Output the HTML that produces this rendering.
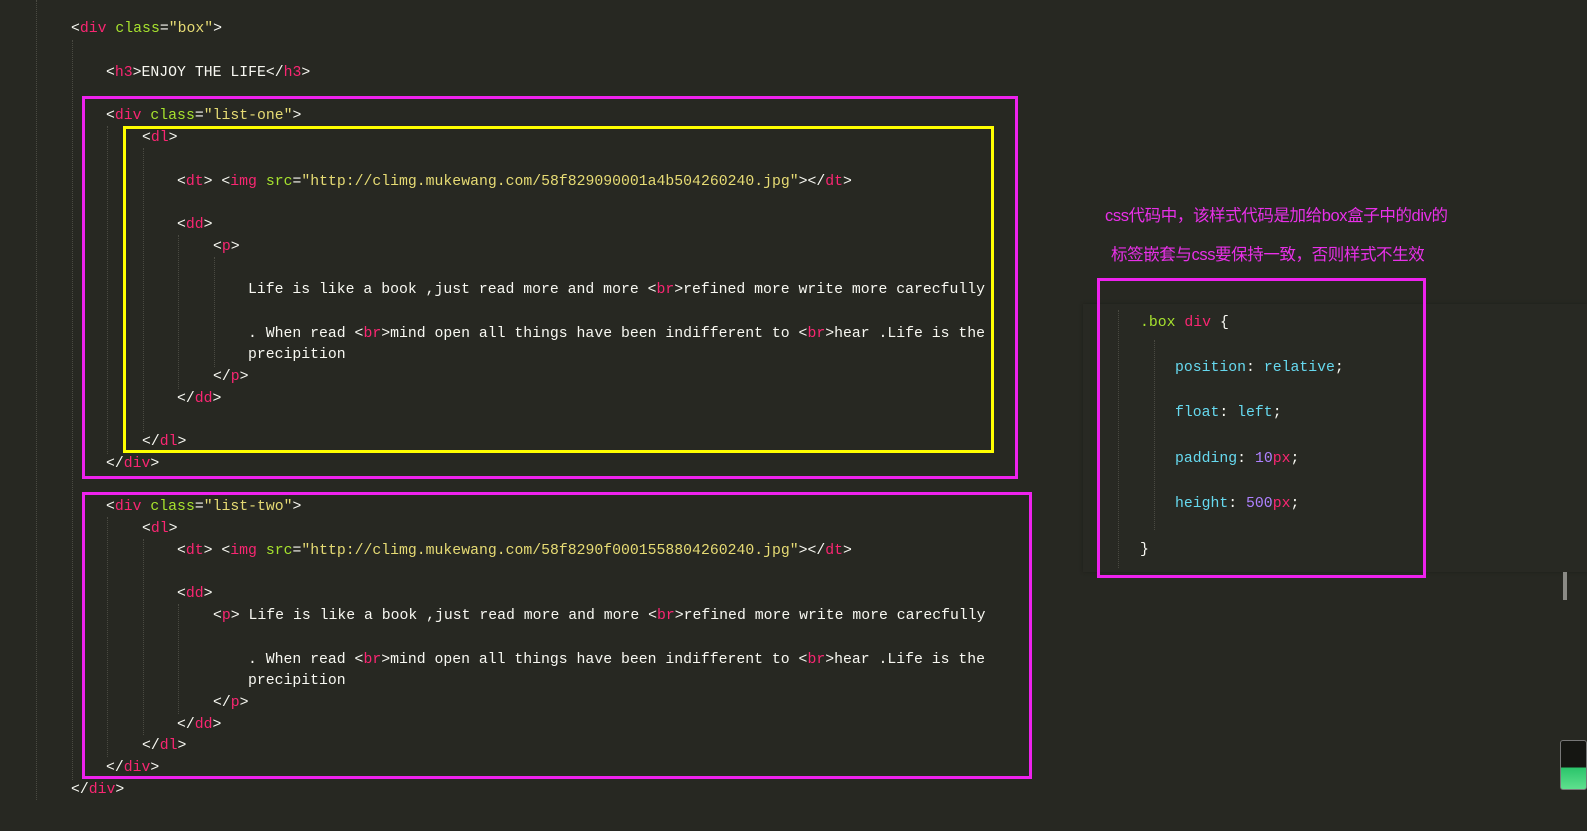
<!DOCTYPE html>
<html><head><meta charset="utf-8"><style>
body{margin:0;width:1587px;height:831px;background:#272822;overflow:hidden;position:relative;font-family:"Liberation Mono",monospace;font-size:14.8px;color:#f8f8f2}
.l{position:absolute;white-space:pre;line-height:20px;margin-top:2px}
.t{color:#f92672}.a{color:#a6e22e}.s{color:#e6db74}.k{color:#66d9ef}.n{color:#ae81ff}
.box{position:absolute;box-sizing:border-box}
.g{position:absolute;width:0;border-left:1px dotted #4a4a42}
.cn{position:absolute;font-family:"Liberation Sans","Noto Sans CJK SC",sans-serif;font-size:16.5px;color:#e830e8;letter-spacing:-0.4px;white-space:pre}
</style></head><body>
<div class="g" style="left:36px;top:0;height:800px"></div>
<div class="g" style="left:72px;top:40px;height:740px"></div>
<div class="g" style="left:107px;top:126px;height:328px"></div>
<div class="g" style="left:143px;top:148px;height:284px"></div>
<div class="g" style="left:178px;top:235px;height:154px"></div>
<div class="g" style="left:214px;top:257px;height:110px"></div>
<div class="g" style="left:107px;top:517px;height:240px"></div>
<div class="g" style="left:143px;top:539px;height:196px"></div>
<div class="g" style="left:178px;top:604px;height:110px"></div>

<div class="l" style="left:71px;top:17px">&lt;<span class="t">div</span> <span class="a">class</span>=<span class="s">"box"</span>&gt;</div>
<div class="l" style="left:106px;top:61px">&lt;<span class="t">h3</span>&gt;ENJOY THE LIFE&lt;/<span class="t">h3</span>&gt;</div>
<div class="l" style="left:106px;top:104px">&lt;<span class="t">div</span> <span class="a">class</span>=<span class="s">"list-one"</span>&gt;</div>
<div class="l" style="left:142px;top:126px">&lt;<span class="t">dl</span>&gt;</div>
<div class="l" style="left:177px;top:170px">&lt;<span class="t">dt</span>&gt; &lt;<span class="t">img</span> <span class="a">src</span>=<span class="s">"http://climg.mukewang.com/58f829090001a4b504260240.jpg"</span>&gt;&lt;/<span class="t">dt</span>&gt;</div>
<div class="l" style="left:177px;top:213px">&lt;<span class="t">dd</span>&gt;</div>
<div class="l" style="left:213px;top:235px">&lt;<span class="t">p</span>&gt;</div>
<div class="l" style="left:248px;top:278px">Life is like a book ,just read more and more &lt;<span class="t">br</span>&gt;refined more write more carecfully</div>
<div class="l" style="left:248px;top:322px">. When read &lt;<span class="t">br</span>&gt;mind open all things have been indifferent to &lt;<span class="t">br</span>&gt;hear .Life is the</div>
<div class="l" style="left:248px;top:343px">precipition</div>
<div class="l" style="left:213px;top:365px">&lt;/<span class="t">p</span>&gt;</div>
<div class="l" style="left:177px;top:387px">&lt;/<span class="t">dd</span>&gt;</div>
<div class="l" style="left:142px;top:430px">&lt;/<span class="t">dl</span>&gt;</div>
<div class="l" style="left:106px;top:452px">&lt;/<span class="t">div</span>&gt;</div>
<div class="l" style="left:106px;top:495px">&lt;<span class="t">div</span> <span class="a">class</span>=<span class="s">"list-two"</span>&gt;</div>
<div class="l" style="left:142px;top:517px">&lt;<span class="t">dl</span>&gt;</div>
<div class="l" style="left:177px;top:539px">&lt;<span class="t">dt</span>&gt; &lt;<span class="t">img</span> <span class="a">src</span>=<span class="s">"http://climg.mukewang.com/58f8290f0001558804260240.jpg"</span>&gt;&lt;/<span class="t">dt</span>&gt;</div>
<div class="l" style="left:177px;top:582px">&lt;<span class="t">dd</span>&gt;</div>
<div class="l" style="left:213px;top:604px">&lt;<span class="t">p</span>&gt; Life is like a book ,just read more and more &lt;<span class="t">br</span>&gt;refined more write more carecfully</div>
<div class="l" style="left:248px;top:648px">. When read &lt;<span class="t">br</span>&gt;mind open all things have been indifferent to &lt;<span class="t">br</span>&gt;hear .Life is the</div>
<div class="l" style="left:248px;top:669px">precipition</div>
<div class="l" style="left:213px;top:691px">&lt;/<span class="t">p</span>&gt;</div>
<div class="l" style="left:177px;top:713px">&lt;/<span class="t">dd</span>&gt;</div>
<div class="l" style="left:142px;top:734px">&lt;/<span class="t">dl</span>&gt;</div>
<div class="l" style="left:106px;top:756px">&lt;/<span class="t">div</span>&gt;</div>
<div class="l" style="left:71px;top:778px">&lt;/<span class="t">div</span>&gt;</div>

<div class="box" style="left:82px;top:96px;width:936px;height:383px;border:3px solid #ee22ee"></div>
<div class="box" style="left:123px;top:126px;width:871px;height:327px;border:3px solid #ffff00"></div>
<div class="box" style="left:82px;top:492px;width:950px;height:287px;border:3px solid #ee22ee"></div>

<div class="cn" style="left:1105px;top:202px">css代码中，该样式代码是加给box盒子中的div的</div>
<div class="cn" style="left:1111px;top:241px">标签嵌套与css要保持一致，否则样式不生效</div>

<div style="position:absolute;left:1083px;top:304px;width:504px;height:268px;background:#282923;box-shadow:0 0 3px #1e1f1a"></div>
<div class="g" style="left:1118px;top:310px;height:258px"></div>
<div class="g" style="left:1154px;top:340px;height:190px"></div>
<div class="l" style="left:1140px;top:311px"><span class="a">.box</span> <span class="t">div</span> {</div>
<div class="l" style="left:1175px;top:356px"><span class="k">position</span>: <span class="k">relative</span>;</div>
<div class="l" style="left:1175px;top:401px"><span class="k">float</span>: <span class="k">left</span>;</div>
<div class="l" style="left:1175px;top:447px"><span class="k">padding</span>: <span class="n">10</span><span class="t">px</span>;</div>
<div class="l" style="left:1175px;top:492px"><span class="k">height</span>: <span class="n">500</span><span class="t">px</span>;</div>
<div class="l" style="left:1140px;top:538px">}</div>
<div class="box" style="left:1097px;top:278px;width:329px;height:300px;border:3px solid #ee22ee"></div>

<div style="position:absolute;left:1563px;top:572px;width:4px;height:28px;background:#8a8a85"></div>
<div style="position:absolute;left:1560px;top:740px;width:27px;height:50px;border:1px solid #777;border-radius:3px;background:linear-gradient(#151612 0,#151612 55%,#2ac46a 55%,#5fe08e 100%);box-sizing:border-box"></div>
</body></html>
